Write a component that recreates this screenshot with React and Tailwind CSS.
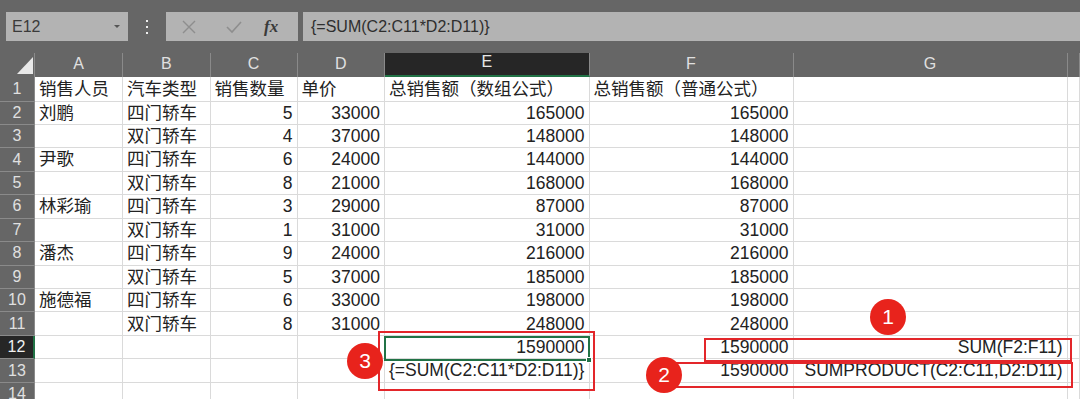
import React from "react";

const FONT = { fontFamily: '"Liberation Sans", "Noto Sans CJK SC", sans-serif' };

// column widths (row header, A..G, rest)
const COLS = [
  "w-[35px]",
  "w-[88px]",
  "w-[87.5px]",
  "w-[87px]",
  "w-[87.5px]",
  "w-[204.5px]",
  "w-[204px]",
  "w-[274px]",
  "flex-1",
];

const LETTERS = ["A", "B", "C", "D", "E", "F", "G", ""];

// [text, align] for columns A..G
const ROWS = [
  [["销售人员"], ["汽车类型"], ["销售数量"], ["单价"], ["总销售额（数组公式）"], ["总销售额（普通公式）"], [""]],
  [["刘鹏"], ["四门轿车"], ["5", "r"], ["33000", "r"], ["165000", "r"], ["165000", "r"], [""]],
  [[""], ["双门轿车"], ["4", "r"], ["37000", "r"], ["148000", "r"], ["148000", "r"], [""]],
  [["尹歌"], ["四门轿车"], ["6", "r"], ["24000", "r"], ["144000", "r"], ["144000", "r"], [""]],
  [[""], ["双门轿车"], ["8", "r"], ["21000", "r"], ["168000", "r"], ["168000", "r"], [""]],
  [["林彩瑜"], ["四门轿车"], ["3", "r"], ["29000", "r"], ["87000", "r"], ["87000", "r"], [""]],
  [[""], ["双门轿车"], ["1", "r"], ["31000", "r"], ["31000", "r"], ["31000", "r"], [""]],
  [["潘杰"], ["四门轿车"], ["9", "r"], ["24000", "r"], ["216000", "r"], ["216000", "r"], [""]],
  [[""], ["双门轿车"], ["5", "r"], ["37000", "r"], ["185000", "r"], ["185000", "r"], [""]],
  [["施德福"], ["四门轿车"], ["6", "r"], ["33000", "r"], ["198000", "r"], ["198000", "r"], [""]],
  [[""], ["双门轿车"], ["8", "r"], ["31000", "r"], ["248000", "r"], ["248000", "r"], [""]],
  [[""], [""], [""], [""], ["1590000", "r"], ["1590000", "r"], ["SUM(F2:F11)", "r"]],
  [[""], [""], [""], [""], ["{=SUM(C2:C11*D2:D11)}"], ["1590000", "r"], ["SUMPRODUCT(C2:C11,D2:D11)", "r"]],
  [[""], [""], [""], [""], [""], [""], [""]],
];

function Toolbar() {
  return (
    <div className="flex h-[53px] items-start pt-[12px]">
      <div className="ml-[6px] flex h-[29px] w-[122px] items-center justify-between bg-[#b3b3b3] pl-[6px] pr-[8px] text-[16px] text-[#3a3a3a]">
        <span>E12</span>
        <span className="h-0 w-0 border-x-[3px] border-t-[3px] border-x-transparent border-t-[#555]" />
      </div>
      <div className="ml-[16px] flex h-[29px] w-[6px] flex-col items-center justify-center gap-[4px]">
        <span className="h-[2px] w-[2px] bg-[#eee]" />
        <span className="h-[2px] w-[2px] bg-[#eee]" />
        <span className="h-[2px] w-[2px] bg-[#eee]" />
      </div>
      <div className="ml-[16px] flex h-[29px] w-[132px] items-center bg-[#b3b3b3]">
        <svg width="14" height="14" viewBox="0 0 14 14" className="ml-[16px]">
          <path d="M1 1 L13 13 M13 1 L1 13" stroke="#8e8e8e" strokeWidth="1.4" fill="none" />
        </svg>
        <svg width="16" height="14" viewBox="0 0 16 14" className="ml-[30px]">
          <path d="M1 7 L6 12 L15 2" stroke="#8e8e8e" strokeWidth="1.6" fill="none" />
        </svg>
        <span
          className="ml-[22px] text-[17px] font-bold italic text-[#3a3a3a]"
          style={{ fontFamily: '"Liberation Serif", serif' }}
        >
          fx
        </span>
      </div>
      <div className="ml-[5px] flex h-[29px] flex-1 items-center bg-[#b3b3b3] pl-[8px] text-[16px] text-[#2e2e2e]">
        {"{=SUM(C2:C11*D2:D11)}"}
      </div>
    </div>
  );
}

function HeaderRow() {
  return (
    <div className="flex h-[24px]">
      <div className={`${COLS[0]} relative h-full border-r border-[#8a8a8a]`}>
        <svg width="16" height="17" viewBox="0 0 16 17" className="absolute left-[17px] top-[4px]">
          <polygon points="16,0 16,17 0,17" fill="#e8e8e8" />
        </svg>
      </div>
      {LETTERS.map((l, i) => {
        const sel = l === "E";
        return (
          <div
            key={i}
            className={`${COLS[i + 1]} flex h-full items-end justify-center pb-[1px] text-[16px] ${
              sel ? "border-b-2 border-r border-b-[#217346] border-r-[#8a8a8a] bg-[#262626] text-[#e6e6e6]" : "border-r border-[#8a8a8a] text-[#e0e0e0]"
            }`}
          >
            {l}
          </div>
        );
      })}
    </div>
  );
}

function Row({ n, cells }) {
  const h = n === 1 ? "h-[24.5px]" : "h-[23.45px]";
  const sel = n === 12;
  return (
    <div className={`flex ${h}`}>
      <div
        className={`${COLS[0]} flex h-full items-center justify-center text-[16px] ${
          sel ? "border-b border-r-2 border-b-[#8a8a8a] border-r-[#217346] bg-[#262626] text-[#f0f0f0]" : "border-b border-r border-[#8a8a8a] text-[#e0e0e0]"
        }`}
      >
        {n}
      </div>
      {[...cells, [""]].map(([t, a], i) => (
        <div
          key={i}
          className={`${COLS[i + 1]} flex h-full items-center overflow-visible whitespace-nowrap border-b border-r border-[#dadada] bg-white px-[4px] text-[17.5px] text-[#222] ${
            a === "r" ? "justify-end" : "justify-start"
          }`}
        >
          {t}
        </div>
      ))}
    </div>
  );
}

function Badge({ n, className }) {
  return (
    <div
      className={`absolute flex h-[36px] w-[36px] items-center justify-center rounded-full bg-[#e8231c] text-[21px] text-white ${className}`}
    >
      {n}
    </div>
  );
}

export default function App() {
  return (
    <div className="relative h-[399px] w-[1080px] overflow-hidden bg-[#666666]" style={FONT}>
      <Toolbar />
      <HeaderRow />
      {ROWS.map((cells, i) => (
        <Row key={i} n={i + 1} cells={cells} />
      ))}

      {/* selected cell E12 */}
      <div className="absolute left-[384px] top-[336px] h-[25px] w-[206px] border-2 border-[#217346]" />
      <div className="absolute left-[586px] top-[357px] h-[6px] w-[6px] border border-white bg-[#217346]" />

      {/* annotations */}
      <div className="absolute left-[378px] top-[331px] h-[60px] w-[217px] border-2 border-[#e3262a]" />
      <div className="absolute left-[704px] top-[338px] h-[24px] w-[368px] border-2 border-[#e3262a]" />
      <div className="absolute left-[658px] top-[362px] h-[26px] w-[415px] border-2 border-[#e3262a]" />
      <Badge n="3" className="left-[347px] top-[343px]" />
      <Badge n="2" className="left-[646px] top-[357px]" />
      <Badge n="1" className="left-[870px] top-[299px]" />
    </div>
  );
}
